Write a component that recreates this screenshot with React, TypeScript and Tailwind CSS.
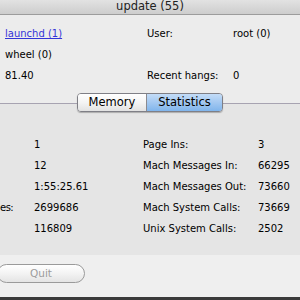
import React from "react";

const topRows: [React.ReactNode, string, string][] = [
  [
    <span className="text-[#3434d8] underline underline-offset-[1px]">launchd (1)</span>,
    "User:",
    "root (0)",
  ],
  ["wheel (0)", "", ""],
  ["81.40", "Recent hangs:", "0"],
];

const stats: [string, string, string, string][] = [
  ["", "1", "Page Ins:", "3"],
  ["", "12", "Mach Messages In:", "66295"],
  ["", "1:55:25.61", "Mach Messages Out:", "73660"],
  ["es:", "2699686", "Mach System Calls:", "73669"],
  ["", "116809", "Unix System Calls:", "2502"],
];

export default function App() {
  return (
    <div className="w-[300px] h-[300px] overflow-hidden flex flex-col bg-[#ececec] text-black text-[10px] font-['DejaVu_Sans',sans-serif]">
      {/* title bar */}
      <div className="h-[15px] shrink-0 flex items-center justify-center bg-gradient-to-b from-[#e2e2e2] to-[#cdcdcd] border-b border-[#9c9c9c] text-[11.5px] text-[#222] leading-none">
        update (55)
      </div>

      {/* top info */}
      <div className="pt-[8px] pl-[5px] flex flex-col">
        {topRows.map((r, i) => (
          <div key={i} className="flex h-[21px] items-center whitespace-nowrap">
            <div className="w-[142px]">{r[0]}</div>
            <div className="w-[86px]">{r[1]}</div>
            <div>{r[2]}</div>
          </div>
        ))}
      </div>

      {/* tabs + group box */}
      <div className="mt-[7px] flex flex-col">
        <div className="relative z-10 flex justify-center h-[19px]">
          <div className="flex w-[146px] h-[19px] rounded-[4px] border border-[#7f7f86] overflow-hidden shadow-[0_1px_1px_rgba(0,0,0,0.25)] text-[11.5px] leading-none">
            <div className="w-[69px] flex items-center justify-center bg-gradient-to-b from-[#ffffff] via-[#f4f4f4] to-[#e2e2e2] border-r border-[#8a8a90]">
              Memory
            </div>
            <div className="flex-1 flex items-center justify-center bg-gradient-to-b from-[#c3dcf7] via-[#a3c8f1] to-[#80b5ec]">
              Statistics
            </div>
          </div>
        </div>
        <div className="mt-[-9px] h-[152px] border-t border-[#a7a3b1] bg-[#e5e5e5] pt-[30px] flex flex-col">
          {stats.map((r, i) => (
            <div key={i} className="flex h-[21px] items-center whitespace-nowrap">
              <div className="w-[34px] shrink-0 tracking-[-0.5px]">{r[0]}</div>
              <div className="w-[109px] shrink-0">{r[1]}</div>
              <div className="w-[115px] shrink-0">{r[2]}</div>
              <div>{r[3]}</div>
            </div>
          ))}
        </div>
      </div>

      {/* bottom area */}
      <div className="flex-1 bg-[#efefef] pt-[9px]">
        <div className="ml-[-3px] w-[88px] h-[19px] rounded-full border border-[#9a9a9a] bg-gradient-to-b from-[#ffffff] via-[#f3f3f3] to-[#e4e4e4] flex items-center justify-center text-[10.5px] text-[#9c9c9c] leading-none">
          Quit
        </div>
      </div>
      <div className="h-[3px] shrink-0 bg-[#3a3a3a]" />
    </div>
  );
}
